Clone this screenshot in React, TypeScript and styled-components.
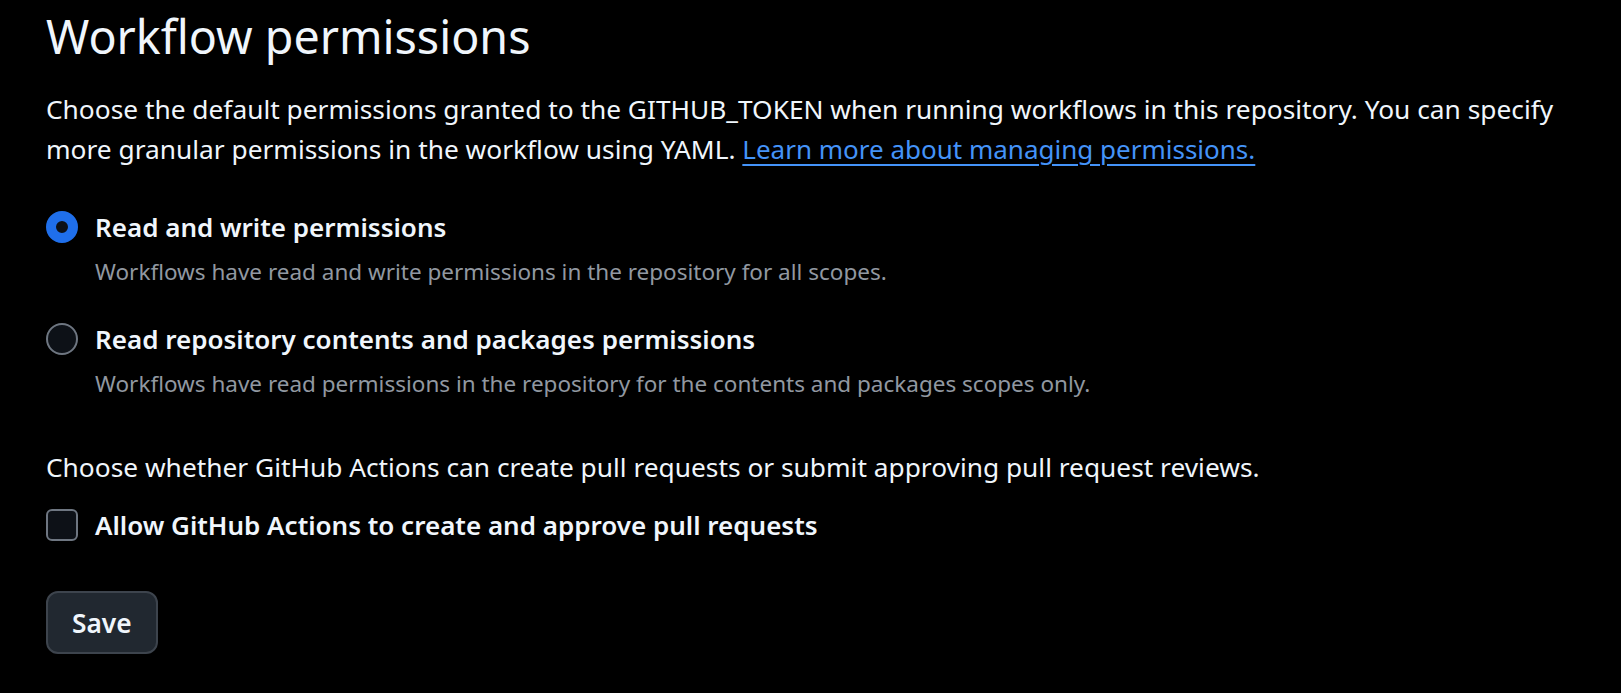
import React from "react";
import styled, { createGlobalStyle } from "styled-components";

const Global = createGlobalStyle`
  html, body {
    margin: 0;
    padding: 0;
    background: #000000;
  }
  body {
    font-family: "Noto Sans", "Open Sans", sans-serif;
    color: #f0f6fc;
  }
`;

const Page = styled.main`
  padding: 8px 46px 30px 46px;
  background: #000000;
  min-height: 100vh;
  box-sizing: border-box;
`;

const Heading = styled.h2`
  margin: 0;
  font-size: 46.6px;
  line-height: 56px;
  font-weight: 400;
  color: #f0f6fc;
`;

const Paragraph = styled.p<{ $gap: number }>`
  margin: ${(p) => p.$gap}px 0 0 0;
  font-size: 26.3px;
  line-height: 40px;
  color: #f0f6fc;
`;

const Link = styled.a`
  color: #4493f8;
  font-size: 26px;
  text-decoration: underline;
  text-underline-offset: 5px;
  text-decoration-thickness: 2px;
`;

const OptionList = styled.div`
  display: flex;
  flex-direction: column;
  gap: 31px;
  margin-top: 40px;
`;

const Option = styled.label`
  display: flex;
  flex-direction: column;
  gap: 9px;
  cursor: pointer;
`;

const OptionRow = styled.div`
  display: flex;
  align-items: center;
  gap: 17px;
`;

const Radio = styled.span<{ $checked: boolean }>`
  flex: none;
  width: 32px;
  height: 32px;
  border-radius: 50%;
  box-sizing: border-box;
  background: #0d1117;
  border: ${(p) => (p.$checked ? "10px solid #1f6feb" : "2px solid #6e7681")};
`;

const Checkbox = styled.span`
  flex: none;
  width: 32px;
  height: 32px;
  border-radius: 6px;
  box-sizing: border-box;
  background: #0d1117;
  border: 2px solid #6e7681;
`;

const Label = styled.span`
  font-size: 26px;
  line-height: 36px;
  font-weight: 600;
  color: #f0f6fc;
`;

const Description = styled.span`
  padding-left: 49px;
  font-size: 22.5px;
  line-height: 36px;
  color: #9198a1;
`;

const CheckRow = styled.label`
  display: flex;
  align-items: center;
  gap: 17px;
  margin-top: 20px;
  cursor: pointer;
`;

const SaveButton = styled.button`
  margin-top: 48px;
  height: 63px;
  padding: 0 24px;
  border-radius: 12px;
  border: 2px solid #3d444d;
  background: #212830;
  color: #f0f6fc;
  font-family: "Noto Sans", "Open Sans", sans-serif;
  font-size: 26.3px;
  font-weight: 600;
  cursor: pointer;
`;

export default function App() {
  return (
    <>
      <Global />
      <Page>
        <Heading>Workflow permissions</Heading>
        <Paragraph $gap={25}>
          Choose the default permissions granted to the GITHUB_TOKEN when running workflows in this repository. You can specify
          <br />
          more granular permissions in the workflow using YAML.{" "}
          <Link href="#">Learn more about managing permissions.</Link>
        </Paragraph>
        <OptionList>
          <Option>
            <OptionRow>
              <Radio $checked={true} />
              <Label>Read and write permissions</Label>
            </OptionRow>
            <Description>Workflows have read and write permissions in the repository for all scopes.</Description>
          </Option>
          <Option>
            <OptionRow>
              <Radio $checked={false} />
              <Label>Read repository contents and packages permissions</Label>
            </OptionRow>
            <Description>
              Workflows have read permissions in the repository for the contents and packages scopes only.
            </Description>
          </Option>
        </OptionList>
        <Paragraph $gap={45}>
          Choose whether GitHub Actions can create pull requests or submit approving pull request reviews.
        </Paragraph>
        <CheckRow>
          <Checkbox />
          <Label>Allow GitHub Actions to create and approve pull requests</Label>
        </CheckRow>
        <SaveButton>Save</SaveButton>
      </Page>
    </>
  );
}
